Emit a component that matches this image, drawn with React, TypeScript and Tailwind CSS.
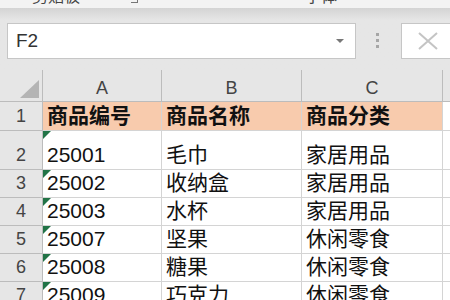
import React from "react";

const rows: { n: string; h: string; a: string; b: string; c: string }[] = [
  { n: "2", h: "h-[39px]", a: "25001", b: "毛巾", c: "家居用品" },
  { n: "3", h: "h-[28px]", a: "25002", b: "收纳盒", c: "家居用品" },
  { n: "4", h: "h-[28px]", a: "25003", b: "水杯", c: "家居用品" },
  { n: "5", h: "h-[28px]", a: "25007", b: "坚果", c: "休闲零食" },
  { n: "6", h: "h-[28px]", a: "25008", b: "糖果", c: "休闲零食" },
  { n: "7", h: "h-[28px]", a: "25009", b: "巧克力", c: "休闲零食" },
];

const font = { fontFamily: "'Liberation Sans','Noto Sans CJK SC',sans-serif" };

export default function App() {
  return (
    <div className="w-[450px] h-[300px] overflow-hidden bg-white" style={font}>
      {/* ribbon remnant */}
      <div className="h-[8px] bg-[#f3f3f3] relative overflow-hidden">
        <div className="absolute left-[32px] top-[-11px] text-[16px] leading-[16px] text-[#444]">剪贴板</div>
        <div className="absolute left-[131px] top-[-4px] w-[7px] h-[7px] border-r border-b border-[#777]"></div>
        <div className="absolute left-[305px] top-[-11px] text-[16px] leading-[16px] text-[#444]">字体</div>
      </div>
      {/* formula bar */}
      <div className="h-[62px] bg-gradient-to-b from-[#d4d4d4] via-[#e6e6e6] via-[20%] to-[#e6e6e6] flex items-start pt-[15px]">
        <div className="ml-[7px] w-[349px] h-[36px] bg-white border border-[#c6c6c6] flex items-center justify-between pl-[8px] pr-[11px]">
          <span className="text-[19px] text-[#333]">F2</span>
          <svg width="8" height="5" viewBox="0 0 8 5"><path d="M0 0 L8 0 L4 4 Z" fill="#777" /></svg>
        </div>
        <div className="ml-[20px] mt-[10px] flex flex-col gap-[3px]">
          <div className="w-[3px] h-[3px] bg-[#a6a6a6]"></div>
          <div className="w-[3px] h-[3px] bg-[#a6a6a6]"></div>
          <div className="w-[3px] h-[3px] bg-[#a6a6a6]"></div>
        </div>
        <div className="ml-[22px] flex-1 h-[36px] bg-white border border-[#c6c6c6] border-r-0 flex items-center pl-[16px]">
          <svg width="20" height="18" viewBox="0 0 20 18">
            <path d="M1 1 L19 17 M19 1 L1 17" stroke="#c4c4c4" strokeWidth="2" />
          </svg>
        </div>
      </div>
      {/* grid */}
      <div className="grid grid-cols-[43px_119px_140px_141px_1fr]">
        {/* column headers */}
        <div className="h-[32px] bg-[#e6e6e6] border-r border-b border-[#bcbcbc] relative">
          <svg className="absolute left-[20px] top-[10px]" width="20" height="19" viewBox="0 0 20 19">
            <path d="M19 0 L19 18 L0 18 Z" fill="#b4b4b4" />
          </svg>
        </div>
        {["A", "B", "C"].map((l) => (
          <div key={l} className="h-[32px] bg-[#e6e6e6] border-r border-b border-[#bcbcbc] flex items-end justify-center pb-[2px] text-[18px] leading-[22px] text-[#444]">
            {l}
          </div>
        ))}
        <div className="h-[32px] bg-[#e6e6e6] border-b border-[#bcbcbc]"></div>

        {/* row 1 */}
        <div className="h-[29px] bg-[#e6e6e6] border-r border-b border-[#bcbcbc] flex items-end justify-center pb-[3px] text-[18px] leading-[22px] text-[#444]">1</div>
        {["商品编号", "商品名称", "商品分类"].map((t) => (
          <div key={t} className="h-[29px] bg-[#f8cbad] border-r border-b border-[#d4d4d4] flex items-end pl-[4px] pb-[1px] text-[21px] leading-[26px] font-bold text-[#111] whitespace-nowrap overflow-hidden">
            {t}
          </div>
        ))}
        <div className="h-[29px] border-b border-[#d4d4d4]"></div>

        {rows.map((r) => (
          <React.Fragment key={r.n}>
            <div className={`${r.h} bg-[#e6e6e6] border-r border-b border-[#bcbcbc] flex items-end justify-center pb-[3px] text-[18px] leading-[22px] text-[#444]`}>{r.n}</div>
            <div className={`${r.h} border-r border-b border-[#d4d4d4] flex items-end pl-[4px] pb-[1px] text-[21px] leading-[26px] text-[#111] relative whitespace-nowrap`}>
              <svg className="absolute left-0 top-0" width="8" height="8" viewBox="0 0 8 8">
                <path d="M0 0 L8 0 L0 8 Z" fill="#217346" />
              </svg>
              {r.a}
            </div>
            <div className={`${r.h} border-r border-b border-[#d4d4d4] flex items-end pl-[4px] pb-[1px] text-[21px] leading-[26px] text-[#111] whitespace-nowrap`}>{r.b}</div>
            <div className={`${r.h} border-r border-b border-[#d4d4d4] flex items-end pl-[4px] pb-[1px] text-[21px] leading-[26px] text-[#111] whitespace-nowrap`}>{r.c}</div>
            <div className={`${r.h} border-b border-[#d4d4d4]`}></div>
          </React.Fragment>
        ))}
      </div>
    </div>
  );
}
